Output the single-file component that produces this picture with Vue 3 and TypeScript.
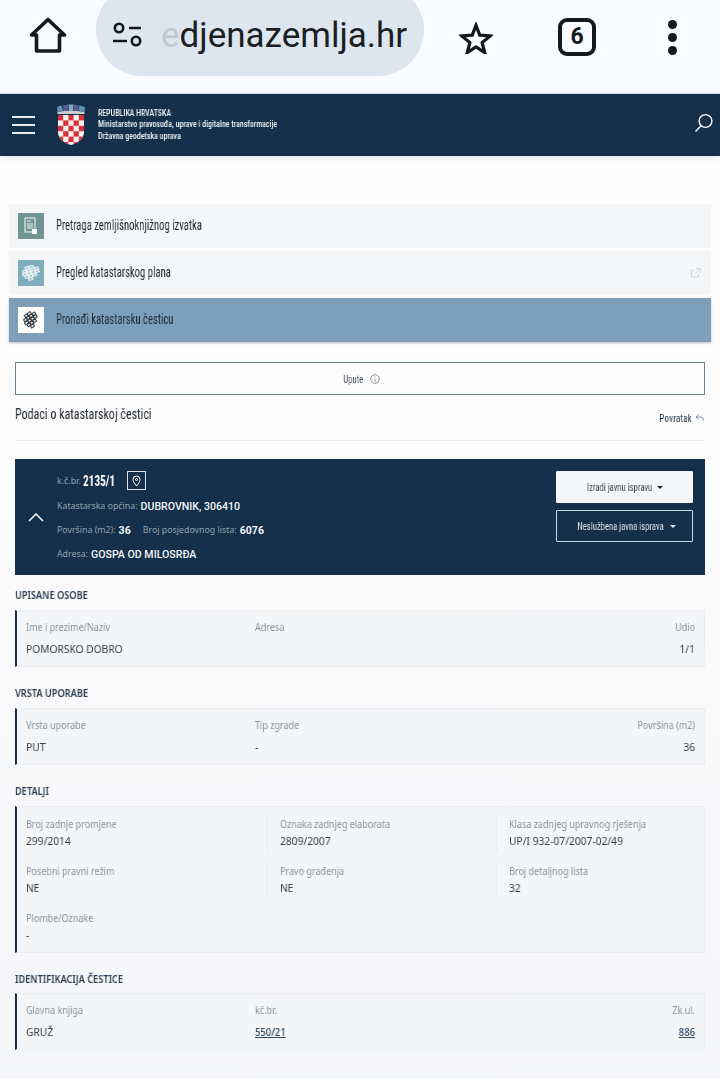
<script setup lang="ts">
interface Cell { label: string; value: string; link?: boolean; align?: 'right' }
interface Sec { title: string; cells: Cell[]; cls: string }

const squares: { x: number; y: number }[] = []
for (let r = 0; r < 6; r++) {
  for (let c = 0; c < 5; c++) {
    if ((r + c) % 2 === 0) squares.push({ x: c * 5.2, y: r * 5.4 })
  }
}

// Small land parcels used in the two map icons.
const parcels: { x: number; y: number; w: number; h: number }[] = [
  { x: 6, y: 1, w: 3, h: 2.500 }, { x: 9.500, y: 1, w: 3.500, h: 2.500 },
  { x: 3, y: 4, w: 3, h: 2.500 }, { x: 6.500, y: 4, w: 3, h: 2.500 }, { x: 10, y: 4, w: 3, h: 2.500 }, { x: 13.500, y: 4, w: 3, h: 2.500 },
  { x: 2, y: 7, w: 3.500, h: 2.500 }, { x: 6, y: 7, w: 3, h: 2.500 }, { x: 9.500, y: 7, w: 3, h: 2.500 }, { x: 13, y: 7, w: 3, h: 2.500 },
  { x: 3, y: 10, w: 3, h: 2.500 }, { x: 6.500, y: 10, w: 3, h: 2.500 }, { x: 10, y: 10, w: 3, h: 2.500 },
  { x: 5, y: 13, w: 3.500, h: 2.500 }
]

const tableSections: Sec[] = [
  {
    title: 'UPISANE OSOBE', cls: 'first',
    cells: [
      { label: 'Ime i prezime/Naziv', value: 'POMORSKO DOBRO' },
      { label: 'Adresa', value: '' },
      { label: 'Udio', value: '1/1', align: 'right' }
    ]
  },
  {
    title: 'VRSTA UPORABE', cls: 'second',
    cells: [
      { label: 'Vrsta uporabe', value: 'PUT' },
      { label: 'Tip zgrade', value: '-' },
      { label: 'Površina (m2)', value: '36', align: 'right' }
    ]
  }
]

const details: Cell[] = [
  { label: 'Broj zadnje promjene', value: '299/2014' },
  { label: 'Oznaka zadnjeg elaborata', value: '2809/2007' },
  { label: 'Klasa zadnjeg upravnog rješenja', value: 'UP/I 932-07/2007-02/49' },
  { label: 'Posebni pravni režim', value: 'NE' },
  { label: 'Pravo građenja', value: 'NE' },
  { label: 'Broj detaljnog lista', value: '32' },
  { label: 'Plombe/Oznake', value: '-' }
]

const ident: Cell[] = [
  { label: 'Glavna knjiga', value: 'GRUŽ' },
  { label: 'kč.br.', value: '550/21', link: true },
  { label: 'Zk.ul.', value: '886', link: true, align: 'right' }
]
</script>

<template>
  <div class="page">
    <div class="chrome">
      <svg class="c-home" width="38" height="38" viewBox="0 0 38 38" fill="none" stroke="#15181c" stroke-width="3.600" stroke-linejoin="round" stroke-linecap="round">
        <path d="M2.500 18 19 2.500 35.500 18H30.500v16H7.500V18z" />
      </svg>
      <div class="omni">
        <svg class="tune" width="32" height="26" viewBox="0 0 32 26" fill="none" stroke="#15181c" stroke-width="2.600">
          <circle cx="7" cy="6" r="4.200" />
          <path d="M17 6h12M1 19h14" />
          <circle cx="24" cy="19" r="4.200" />
        </svg>
        <span class="url"><span class="fade">e</span>djenazemlja.hr</span>
      </div>
      <svg class="c-star" width="34" height="32" viewBox="0 0 36 34" fill="none" stroke="#15181c" stroke-width="3.400" stroke-linejoin="miter">
        <path d="M18 3.500l4 10.500 11 .8-8.500 7 2.800 10.700L18 26.500 8.700 32.500l2.800-10.700L3 14.800l11-.8z" />
      </svg>
      <div class="tabs-count">6</div>
      <div class="dots"><i></i><i></i><i></i></div>
    </div>

    <header class="site-head">
      <div class="burger"><i></i><i></i><i></i></div>
      <svg class="crest" width="30" height="42" viewBox="0 0 30 42">
        <path d="M1 3l4.500-1.500L7 6.500 1.500 8z" fill="#5b93b8" />
        <path d="M7 1.500 12 0.500 12.500 7 7.500 7z" fill="#5a5c8c" />
        <path d="M12.500 0.500h5l-.5 6.500h-4z" fill="#7fb1c4" />
        <path d="M18 .5l5 1-1 5.500-4.500 0z" fill="#5a5c8c" />
        <path d="M23.500 1.500 29 3l-.5 5-6-1.500z" fill="#5b93b8" />
        <path d="M1.500 8 8 7 22 7 28.500 8 28.500 10 1.500 10z" fill="#c9ccd0" />
        <path d="M2 11h26v17c0 7-6 11-13 13C8 39 2 35 2 28z" fill="#fbf4f3" />
        <clipPath id="crest-clip"><path d="M2 11h26v17c0 7-6 11-13 13C8 39 2 35 2 28z" /></clipPath>
        <g clip-path="url(#crest-clip)" fill="#d8323a">
          <rect v-for="(s, i) in squares" :key="i" :x="2 + s.x" :y="11 + s.y" width="5.200" height="5.400" />
        </g>
      </svg>
      <div class="ministry">
        <span class="m-line">REPUBLIKA HRVATSKA</span>
        <span class="m-line">Ministarstvo pravosuđa, uprave i digitalne transformacije</span>
        <span class="m-line">Državna geodetska uprava</span>
      </div>
      <svg class="search" width="20" height="20" viewBox="0 0 20 20" fill="none" stroke="#fff" stroke-width="1.400">
        <circle cx="11.500" cy="8" r="6.400" />
        <path d="M7 12.800 1.500 18.500" />
      </svg>
    </header>

    <main class="content">
      <nav class="tabs">
        <div class="tab">
          <span class="tab-ico green">
            <svg width="14" height="18" viewBox="0 0 14 18" fill="none" stroke="#e9f0ee" stroke-width="1.100">
              <rect x="1" y="1" width="10" height="14" />
              <path d="M3 4h4M3 7h6M3 9h6M3 11h6" />
              <rect x="8" y="12" width="5" height="5" fill="#fff" stroke="none" />
            </svg>
          </span>
          <span class="oswald">Pretraga zemljišnoknjižnog izvatka</span>
        </div>
        <div class="tab">
          <span class="tab-ico teal">
            <svg width="22" height="16" viewBox="0 0 18 17" preserveAspectRatio="none">
              <g transform="rotate(-18 9 8.500)">
                <rect v-for="(p, i) in parcels" :key="i" :x="p.x" :y="p.y" :width="p.w" :height="p.h" fill="#a9cbd6" stroke="#eef6f8" stroke-width="0.800" />
              </g>
            </svg>
          </span>
          <span class="oswald">Pregled katastarskog plana</span>
          <svg class="ext" width="10" height="10" viewBox="0 0 10 10" fill="none" stroke="#ced5db" stroke-width="0.900">
            <path d="M7.500 6v3h-7V2h3M5 .6h4.400V5M9.400.6 4.500 5.500" />
          </svg>
        </div>
        <div class="tab active">
          <span class="tab-ico white">
            <svg width="18" height="18" viewBox="0 0 18 17">
              <g transform="rotate(-35 9 8.500)">
                <rect v-for="(p, i) in parcels" :key="i" :x="p.x" :y="p.y" :width="p.w" :height="p.h" fill="#fff" stroke="#33383c" stroke-width="1" />
              </g>
            </svg>
          </span>
          <span class="oswald">Pronađi katastarsku česticu</span>
        </div>
      </nav>

      <div class="wrap">
        <div class="upute">
          <span class="oswald small center">Upute</span>
          <svg width="10" height="10" viewBox="0 0 10 10" fill="none" stroke="#6b7680" stroke-width="0.800">
            <circle cx="5" cy="5" r="4.300" />
            <path d="M5 4.500v3M5 2.500v1" />
          </svg>
        </div>

        <div class="title-row">
          <h1 class="oswald h">Podaci o katastarskoj čestici</h1>
          <span class="back">
            <span class="oswald small back-t">Povratak</span>
            <svg width="9" height="8" viewBox="0 0 9 8" fill="none" stroke="#7b8590" stroke-width="0.900">
              <path d="M3.500.6 1 3l2.500 2.300M1 3h5c1.500 0 2.300 1.200 2.300 3.500" />
            </svg>
          </span>
        </div>

        <section class="card">
          <svg class="chev" width="16" height="10" viewBox="0 0 16 10" fill="none" stroke="#fff" stroke-width="1.500">
            <path d="M1 9l7-7 7 7" />
          </svg>
          <div class="card-info">
            <div class="line top">
              <span class="k">k.č.br.</span>
              <b class="oswald kc">2135/1</b>
              <span class="pin">
                <svg width="9" height="12" viewBox="0 0 9 12" fill="none" stroke="#fff" stroke-width="1">
                  <path d="M4.500 11C2.500 8.500 1 6.500 1 4.500a3.500 3.500 0 0 1 7 0c0 2-1.500 4-3.500 6.500z" />
                  <circle cx="4.500" cy="4.500" r="1" />
                </svg>
              </span>
            </div>
            <div class="line"><span class="k">Katastarska općina:</span><span class="v">DUBROVNIK, 306410</span></div>
            <div class="line"><span class="k">Površina (m2):</span><b class="v bold">36</b><span class="k gap">Broj posjedovnog lista:</span><b class="v bold">6076</b></div>
            <div class="line"><span class="k">Adresa:</span><span class="v">GOSPA OD MILOSRĐA</span></div>
          </div>
          <div class="card-btns">
            <button class="btn light"><span class="oswald small center">Izradi javnu ispravu</span><i class="caret"></i></button>
            <button class="btn ghost"><span class="oswald small center">Neslužbena javna isprava</span><i class="caret"></i></button>
          </div>
        </section>

        <template v-for="s in tableSections" :key="s.title">
          <h2 class="sec-title" :class="s.cls">{{ s.title }}</h2>
          <div class="box row3">
            <div v-for="c in s.cells" :key="c.label" class="cell" :class="{ right: c.align === 'right' }">
              <div class="lbl">{{ c.label }}</div>
              <div class="val">{{ c.value }}</div>
            </div>
          </div>
        </template>

        <h2 class="sec-title third">DETALJI</h2>
        <div class="box detail">
          <div v-for="(c, i) in details" :key="c.label" class="dcell" :class="{ sep: i % 3 !== 0 }">
            <div class="lbl">{{ c.label }}</div>
            <div class="val">{{ c.value }}</div>
          </div>
        </div>

        <h2 class="sec-title fourth">IDENTIFIKACIJA ČESTICE</h2>
        <div class="box row3">
          <div v-for="c in ident" :key="c.label" class="cell" :class="{ right: c.align === 'right' }">
            <div class="lbl">{{ c.label }}</div>
            <div class="val" :class="{ link: c.link }">{{ c.value }}</div>
          </div>
        </div>
      </div>
    </main>
  </div>
</template>

<style>
html, body { margin: 0; background: #f6f7f9; }
</style>

<style scoped>
.page {
  width: 720px;
  height: 1079px;
  overflow: hidden;
  font-family: "Noto Sans", Roboto, sans-serif;
  background: linear-gradient(#fdfdfd 160px, #fbfbfc 500px, #f5f6f8 1079px);
}
.chrome {
  height: 93px;
  background: #f8fbff;
  border-bottom: 1px solid #d8e3ea;
  display: flex;
  align-items: flex-start;
  overflow: hidden;
}
.c-home { margin: 17px 0 0 29px; flex-shrink: 0; }
.omni {
  width: 328px;
  height: 92px;
  margin: -16px 0 0 29px;
  padding-top: 10px;
  box-sizing: border-box;
  background: #dde6ef;
  border-radius: 46px;
  display: flex;
  align-items: center;
  flex-shrink: 0;
}
.tune { margin-left: 16px; flex-shrink: 0; }
.url {
  font-family: Roboto, sans-serif;
  font-size: 35px;
  color: #1b1f24;
  margin-left: 17px;
  white-space: nowrap;
}
.fade { color: #c2c8ce; }
.c-star { margin: 22px 0 0 35px; flex-shrink: 0; }
.tabs-count {
  width: 30px;
  height: 30px;
  margin: 18px 0 0 65px;
  border: 4px solid #15181c;
  border-radius: 9px;
  font: 700 23px/30px Roboto, sans-serif;
  color: #15181c;
  text-align: center;
  flex-shrink: 0;
}
.dots {
  margin: 20px 0 0 72px;
  display: flex;
  flex-direction: column;
  gap: 4px;
}
.dots i { width: 9px; height: 9px; border-radius: 50%; background: #15181c; display: block; }

.site-head {
  height: 62px;
  background: #14304a;
  box-shadow: 0 2px 6px rgba(40, 60, 80, .12);
  display: flex;
  align-items: center;
  position: relative;
}
.burger { margin-left: 12px; width: 23px; display: flex; flex-direction: column; gap: 6px; }
.burger i { display: block; height: 2px; background: #e6edf2; }
.crest { margin-left: 21px; }
.ministry {
  margin-left: 12px;
  display: flex;
  flex-direction: column;
  align-items: flex-start;
  color: #eef3f6;
  font-family: Roboto, sans-serif;
  font-stretch: condensed;
  font-size: 8.500px;
  line-height: 11.500px;
  font-weight: 500;
}
.m-line { display: inline-block; white-space: nowrap; transform: scaleX(.93); transform-origin: left center; will-change: transform; }
.search { position: absolute; right: 6px; top: 19px; }

.tabs {
  padding: 48px 9px 0;
  display: flex;
  flex-direction: column;
  gap: 3px;
}
.tab {
  height: 44px;
  background: #f5f6f8;
  display: flex;
  align-items: center;
  position: relative;
}
.tab .oswald { margin-bottom: 1px; }
.tab.active { background: #7d9fba; box-shadow: 0 1px 2px rgba(60, 80, 100, .4); }
.tab-ico {
  width: 26px;
  height: 26px;
  margin: 0 12px 0 9px;
  display: flex;
  align-items: center;
  justify-content: center;
}
.green { background: #6f9492; }
.teal { background: #7eadbc; }
.white { background: #fff; }
.oswald {
  display: inline-block;
  white-space: nowrap;
  font-family: Roboto, sans-serif;
  font-stretch: condensed;
  font-size: 14.500px;
  color: #20262d;
  font-weight: 400;
  transform: scaleX(.735);
  transform-origin: left center;
  will-change: transform;
}
.center { transform-origin: center; }
.tab.active .oswald { color: #1a2a38; }
.small { font-size: 11.500px; transform: scaleX(.75); }
.ext { position: absolute; right: 10px; top: 17px; }

.wrap { padding: 20px 15px 0; }
.upute {
  height: 31px;
  background: #fdfdfd;
  border: 1px solid #6a8296;
  display: flex;
  align-items: center;
  justify-content: center;
  gap: 3px;
}
.upute .small { color: #4d565f; }
.title-row {
  height: 46px;
  box-sizing: border-box;
  padding-top: 10px;
  border-bottom: 1px solid #e9ebee;
  display: flex;
  justify-content: space-between;
  align-items: flex-start;
}
.h { margin: 0; font-size: 15px; transform: scaleX(.8); }
.back { display: flex; align-items: center; gap: 3px; margin: 6px 1px 0 0; }
.back-t { color: #24384a; transform: scaleX(.82); transform-origin: right center; }

.card {
  margin-top: 18px;
  height: 116px;
  background: #14304a;
  display: flex;
  align-items: flex-start;
}
.chev { margin: 53px 0 0 13px; flex-shrink: 0; }
.card-info { margin-left: 13px; padding-top: 11px; display: flex; flex-direction: column; flex: 1; }
.line { display: flex; align-items: center; height: 24px; font-size: 8.800px; white-space: nowrap; }
.line.top { height: 21px; margin-bottom: 3px; }
.k { color: #8ea2b3; margin-right: 3px; }
.gap { margin-left: 12px; }
.v { color: #f1f5f8; font-family: Roboto, sans-serif; font-size: 10.600px; font-weight: 500; }
.bold { font-weight: 700; }
.kc { color: #fff; font-size: 15px; font-weight: 700; margin-left: -1px; transform: scaleX(.75); }
.pin {
  width: 17px;
  height: 17px;
  margin-left: 1px;
  border: 1px solid #d8e2ea;
  display: flex;
  align-items: center;
  justify-content: center;
}
.card-btns { margin: 12px 12px 0 0; display: flex; flex-direction: column; gap: 7px; width: 137px; }
.btn {
  height: 32px;
  padding: 0 10px 0 0;
  display: flex;
  align-items: center;
  justify-content: center;
  gap: 6px;
  border-radius: 1px;
  box-sizing: border-box;
}
.light { background: #f5f6f8; border: 1px solid #f5f6f8; }
.light .oswald { color: #3d4650; }
.light .caret { border-top-color: #20262d; margin-left: -13px; }
.ghost { background: transparent; border: 1px solid #c6d6e2; }
.ghost .oswald { color: #dbe5ec; }
.ghost .caret { border-top-color: #e8eef3; margin-left: -15px; }
.caret { width: 0; height: 0; border: 3.200px solid transparent; border-bottom: 0; display: block; }

.sec-title {
  margin: 0;
  font-size: 10px;
  line-height: 14px;
  font-weight: 600;
  color: #2a3f52;
  height: 14px;
  transform: scaleX(.92);
  transform-origin: left center;
  will-change: transform;
}
.first { margin-top: 13px; }
.second, .third, .fourth { margin-top: 19px; }
.box {
  margin-top: 8px;
  background: #f3f5f7;
  border-left: 2px solid #14304a;
  border-right: 1px solid #eceef1;
  border-top: 1px solid #eceef1;
  border-bottom: 1px solid #eceef1;
}
.fourth + .box { margin-top: 7px; }
.row3 {
  height: 57px;
  box-sizing: border-box;
  display: grid;
  grid-template-columns: 229px 1fr 1fr;
  padding: 9px 9px 0;
}
.lbl {
  font-size: 10px;
  line-height: 14px;
  color: #8b939b;
  white-space: nowrap;
  transform: scaleX(.9);
  transform-origin: left center;
  will-change: transform;
}
.val {
  font-size: 11px;
  line-height: 14px;
  color: #383e44;
  margin-top: 8px;
  min-height: 14px;
  transform: scaleX(.93);
  transform-origin: left center;
  will-change: transform;
}
.cell.right { text-align: right; }
.cell.right .lbl, .cell.right .val { transform-origin: right center; }
.val.link { text-decoration: underline; color: #2d4a63; font-weight: 500; transform: scaleX(.86); }
.detail {
  height: 147px;
  box-sizing: border-box;
  display: grid;
  grid-template-columns: 241px 229px 1fr;
  grid-auto-rows: 47px;
  padding: 10px 0 0 9px;
}
.dcell .val { margin-top: 3px; }
.dcell.sep { padding-left: 12px; border-left: 1px solid #e9ebee; height: 35px; margin-top: -1px; padding-top: 1px; }
</style>
